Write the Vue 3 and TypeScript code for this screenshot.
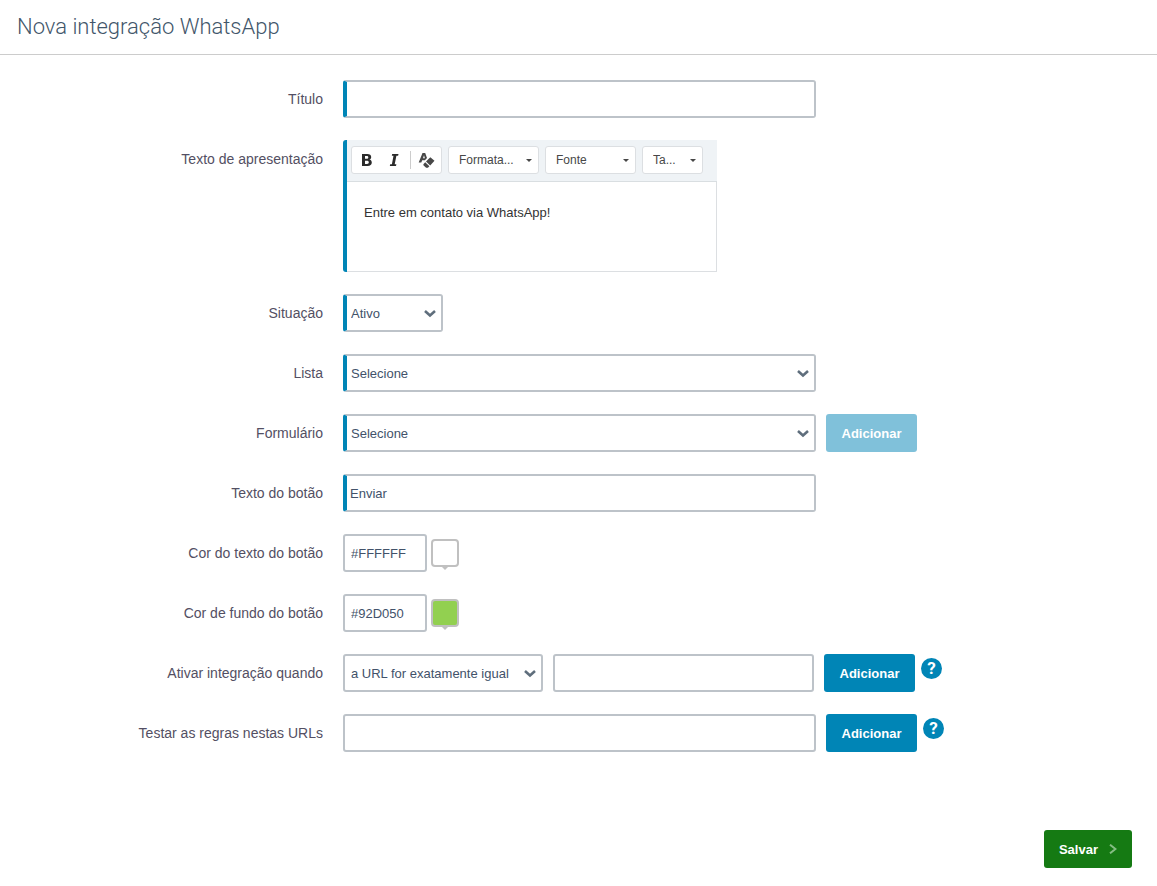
<script setup lang="ts">
import { ref } from 'vue'

interface ToolbarMenu {
  id: string
  label: string
  short: string
  size: string
}

const title = ref('')
const intro = ref('Entre em contato via WhatsApp!')
const status = ref('Ativo')
const list = ref('Selecione')
const form = ref('Selecione')
const buttonText = ref('Enviar')
const textColor = ref('#FFFFFF')
const backgroundColor = ref('#92D050')
const rule = ref('a URL for exatamente igual')
const ruleUrl = ref('')
const testUrl = ref('')

const menus: ToolbarMenu[] = [
  { id: 'format', label: 'Formatação', short: 'Formata...', size: 'wide' },
  { id: 'font', label: 'Fonte', short: 'Fonte', size: 'wide' },
  { id: 'size', label: 'Tamanho', short: 'Ta...', size: 'narrow' },
]
</script>

<template>
  <main class="page">
    <header class="header">
      <h1>Nova integração WhatsApp</h1>
    </header>

    <form class="form" @submit.prevent>
      <div class="row">
        <label for="title">Título</label>
        <div class="controls">
          <input id="title" v-model="title" class="field required" type="text" />
        </div>
      </div>

      <div class="row">
        <label for="intro">Texto de apresentação</label>
        <div class="controls">
          <div class="editor">
            <div class="toolbar">
              <div class="tools">
                <button type="button" aria-label="Negrito">
                  <svg width="16" height="16" viewBox="0 0 16 16">
                    <path fill="#2b2b2b" fill-rule="evenodd" d="M3 2h5.2c2.7 0 4 1.1 4 3 0 1.3-.7 2.2-1.9 2.6 1.6.3 2.5 1.4 2.5 3 0 2.2-1.6 3.4-4.2 3.4H3zm3 2.1v2.7h1.7c1 0 1.6-.5 1.6-1.4 0-.9-.6-1.3-1.7-1.3zm0 4.7v3.1h2c1.2 0 1.8-.6 1.8-1.6 0-1-.7-1.5-1.9-1.5z" />
                  </svg>
                </button>
                <button type="button" aria-label="Itálico">
                  <svg width="16" height="16" viewBox="2 0 16 16">
                    <path fill="#2b2b2b" d="M6.2 2h6.300l-.4 1.700h-1.700L8.700 12.300h1.700L10 14H3.800l.4-1.700h1.700L7.500 3.700H5.800z" />
                  </svg>
                </button>
                <span class="divider"></span>
                <button type="button" aria-label="Remover formatação">
                  <svg width="18" height="16" viewBox="-1 0 18 16">
                    <path fill="#474747" fill-rule="evenodd" d="M.7 10.500L4.500.900h2.700L9 6.100 6.900 8.300H4.200l-.9 2.200zM5 6.300h1.900l-.9-3z" />
                    <path fill="#474747" d="M12.300 5.200l4.200 3.600-4.300 4.600L8 9.500zM7.200 10.300l4.200 3.900-1.500 1.500H8.100L5.400 13.200v-1z" />
                  </svg>
                </button>
              </div>
              <div v-for="menu in menus" :key="menu.id" class="combo" :class="menu.size">
                <select :aria-label="menu.label">
                  <option>{{ menu.short }}</option>
                </select>
                <svg width="6" height="3" viewBox="0 0 6 3"><path fill="#474747" d="M0 0h6L3 3z" /></svg>
              </div>
            </div>
            <textarea id="intro" v-model="intro"></textarea>
          </div>
        </div>
      </div>

      <div class="row">
        <label for="status">Situação</label>
        <div class="controls">
          <div class="select status">
            <select id="status" v-model="status" class="field required">
              <option>Ativo</option>
              <option>Inativo</option>
            </select>
            <svg width="12" height="8" viewBox="0 0 12 8"><path d="M1 1l5 4.500L11 1" /></svg>
          </div>
        </div>
      </div>

      <div class="row">
        <label for="list">Lista</label>
        <div class="controls">
          <div class="select full">
            <select id="list" v-model="list" class="field required">
              <option>Selecione</option>
            </select>
            <svg width="12" height="8" viewBox="0 0 12 8"><path d="M1 1l5 4.500L11 1" /></svg>
          </div>
        </div>
      </div>

      <div class="row">
        <label for="form">Formulário</label>
        <div class="controls">
          <div class="select full">
            <select id="form" v-model="form" class="field required">
              <option>Selecione</option>
            </select>
            <svg width="12" height="8" viewBox="0 0 12 8"><path d="M1 1l5 4.500L11 1" /></svg>
          </div>
          <button class="btn" type="button" disabled>Adicionar</button>
        </div>
      </div>

      <div class="row">
        <label for="button-text">Texto do botão</label>
        <div class="controls">
          <input id="button-text" v-model="buttonText" class="field required" type="text" />
        </div>
      </div>

      <div class="row">
        <label for="text-color">Cor do texto do botão</label>
        <div class="controls color">
          <input id="text-color" v-model="textColor" class="field hex" type="text" />
          <button class="swatch" type="button" aria-label="Escolher cor do texto" :style="{ backgroundColor: textColor }"></button>
        </div>
      </div>

      <div class="row">
        <label for="background-color">Cor de fundo do botão</label>
        <div class="controls color">
          <input id="background-color" v-model="backgroundColor" class="field hex" type="text" />
          <button class="swatch" type="button" aria-label="Escolher cor de fundo" :style="{ backgroundColor: backgroundColor }"></button>
        </div>
      </div>

      <div class="row">
        <label for="rule">Ativar integração quando</label>
        <div class="controls">
          <div class="select rule">
            <select id="rule" v-model="rule" class="field">
              <option>a URL for exatamente igual</option>
            </select>
            <svg width="12" height="8" viewBox="0 0 12 8"><path d="M1 1l5 4.500L11 1" /></svg>
          </div>
          <input v-model="ruleUrl" class="field url" type="text" aria-label="URL da regra" />
          <button class="btn" type="button">Adicionar</button>
          <button class="help" type="button" aria-label="Ajuda">?</button>
        </div>
      </div>

      <div class="row">
        <label for="test-url">Testar as regras nestas URLs</label>
        <div class="controls">
          <input id="test-url" v-model="testUrl" class="field" type="text" />
          <button class="btn" type="button">Adicionar</button>
          <button class="help" type="button" aria-label="Ajuda">?</button>
        </div>
      </div>

      <footer class="actions">
        <button class="btn save" type="submit">
          Salvar
          <svg width="8" height="10" viewBox="0 0 8 10"><path d="M1 .7l5.500 4.300L1 9.300" /></svg>
        </button>
      </footer>
    </form>
  </main>
</template>

<style>
body {
  margin: 0;
  background: #fff;
}
</style>

<style scoped>
.page,
.page * {
  box-sizing: border-box;
}

.page {
  font-family: 'Liberation Sans', Arial, sans-serif;
  font-size: 14px;
  color: #534f63;
}

.header {
  padding: 12px 17px;
  border-bottom: 1px solid #ccc;
}

h1 {
  margin: 0;
  font-family: Roboto, 'Liberation Sans', sans-serif;
  font-size: 22px;
  line-height: 30px;
  font-weight: 300;
  color: #42566a;
}

.form {
  display: flex;
  flex-direction: column;
  gap: 22px;
  padding: 25px 25px 18px 0;
}

.row {
  display: grid;
  grid-template-columns: 323px minmax(0, 1fr);
  column-gap: 20px;
}

.row > label {
  line-height: 38px;
  text-align: right;
}

.controls {
  display: flex;
  align-items: flex-start;
  gap: 10px;
}

.field {
  flex: 0 1 473px;
  width: 100%;
  min-width: 0;
  height: 38px;
  margin: 0;
  padding: 0 6px;
  border: 2px solid #bdc3c9;
  border-radius: 3px;
  background: #fff;
  font: 13px 'Liberation Sans', Arial, sans-serif;
  color: #42526a;
}

.field.required {
  padding-left: 3px;
  border-left: 4px solid #0085b6;
}

select {
  appearance: none;
}

.select {
  position: relative;
}

.select svg {
  position: absolute;
  right: 7px;
  top: 16px;
  pointer-events: none;
}

.select path {
  fill: none;
  stroke: #5f6e7c;
  stroke-width: 2.6;
}

.select .required {
  padding-left: 4px;
}

.full {
  flex: 0 1 473px;
}

.status {
  width: 100px;
}

.rule {
  width: 200px;
}

.field.hex {
  flex-basis: 84px;
}

.field.url {
  flex-basis: 261px;
}

.color {
  gap: 4px;
  align-items: center;
}

.swatch {
  position: relative;
  width: 28px;
  height: 28px;
  padding: 0;
  border: 2px solid #c0c0c0;
  border-radius: 4px;
}

.swatch::after {
  content: '';
  position: absolute;
  left: 9px;
  top: 26px;
  border: 3px solid transparent;
  border-top-color: #c0c0c0;
  border-bottom: 0;
}

.btn {
  min-width: 91px;
  height: 38px;
  padding: 0 15px;
  border: 0;
  border-radius: 3px;
  background: #0085b6;
  color: #fff;
  font: bold 13px 'Liberation Sans', Arial, sans-serif;
}

.btn:disabled {
  background: #80c1da;
}

.help {
  width: 21px;
  height: 21px;
  margin: 4px 0 0 -4px;
  padding: 0;
  border: 0;
  border-radius: 50%;
  background: #0085b6;
  color: #fff;
  font: bold 17px/21px Roboto, 'Liberation Sans', sans-serif;
}

.editor {
  flex: 0 1 374px;
  min-width: 0;
  border-left: 4px solid #0085b6;
  border-radius: 3px 0 0 3px;
}

.toolbar {
  display: flex;
  gap: 6px;
  padding: 6px 4px 7px;
  border-bottom: 1px solid #d9dee1;
  background: #eff3f6;
}

.tools,
.combo {
  display: flex;
  align-items: center;
  height: 28px;
  border: 1px solid #dcdfe2;
  border-radius: 3px;
  background: #fff;
}

.tools {
  width: 91px;
}

.tools button {
  display: flex;
  flex: 0 0 29px;
  align-items: center;
  justify-content: center;
  padding: 0;
  border: 0;
  background: none;
}

.divider {
  width: 1px;
  height: 18px;
  background: #ccc;
}

.combo {
  position: relative;
}

.combo select {
  width: 100%;
  height: 26px;
  padding: 0 10px;
  border: 0;
  background: none;
  font: 12px 'Liberation Sans', Arial, sans-serif;
  color: #474747;
}

.combo svg {
  position: absolute;
  right: 6px;
  top: 12px;
  pointer-events: none;
}

.wide {
  width: 91px;
}

.narrow {
  width: 61px;
}

textarea {
  display: block;
  width: 100%;
  height: 90px;
  padding: 20px 17px;
  border: 1px solid #dcdfe2;
  border-width: 0 1px 1px 0;
  outline: 0;
  resize: none;
  font: 13px/21px 'Liberation Sans', Arial, sans-serif;
  color: #333;
}

.actions {
  display: flex;
  justify-content: flex-end;
  padding-top: 56px;
}

.save {
  display: flex;
  align-items: center;
  gap: 11px;
  min-width: 88px;
  background: #157a13;
}

.save path {
  fill: none;
  stroke: #85bd84;
  stroke-width: 2;
}
</style>
